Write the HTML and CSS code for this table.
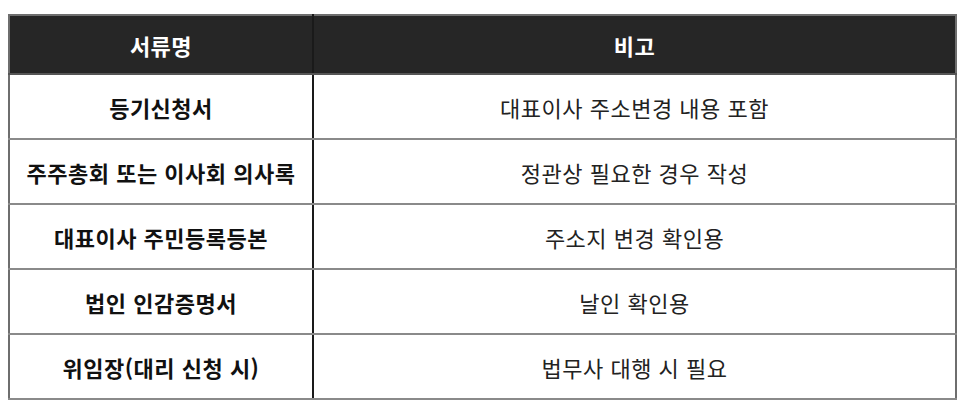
FILE: index.html
```html
<!DOCTYPE html>
<html lang="ko">
<head>
<meta charset="utf-8">
<link rel="stylesheet" href="styles.css">
</head>
<body>
<table class="docs">
  <thead>
    <tr><th class="c1">서류명</th><th class="c2">비고</th></tr>
  </thead>
  <tbody>
    <tr><td class="c1">등기신청서</td><td class="c2">대표이사 주소변경 내용 포함</td></tr>
    <tr><td class="c1">주주총회 또는 이사회 의사록</td><td class="c2">정관상 필요한 경우 작성</td></tr>
    <tr><td class="c1">대표이사 주민등록등본</td><td class="c2">주소지 변경 확인용</td></tr>
    <tr><td class="c1">법인 인감증명서</td><td class="c2">날인 확인용</td></tr>
    <tr><td class="c1">위임장(대리 신청 시)</td><td class="c2">법무사 대행 시 필요</td></tr>
  </tbody>
</table>
</body>
</html>
```
FILE: styles.css
```css
html, body {
  margin: 0;
  padding: 0;
  background: #ffffff;
}
body {
  padding: 14px 8px 0 8px;
  font-family: "Noto Sans CJK KR", "Noto Sans", sans-serif;
  color: #111;
}
.docs {
  width: 949px;
  border-collapse: collapse;
  border: 2px solid #6e6e6e;
  font-size: 22px;
  letter-spacing: 0.5px;
}
.docs th {
  background: #262626;
  color: #ffffff;
  font-weight: 700;
  height: 57px;
  padding: 0;
  text-align: center;
  border-bottom: 2px solid #555;
}
.docs td {
  height: 63px;
  padding: 0;
  text-align: center;
  border-bottom: 2px solid #8a8a8a;
}
.docs .c1 {
  width: 302px;
  border-right: 2px solid #1a1a1a;
}
.docs td.c1 {
  font-weight: 700;
}
.docs td.c2 {
  font-weight: 400;
  color: #222;
}
```
